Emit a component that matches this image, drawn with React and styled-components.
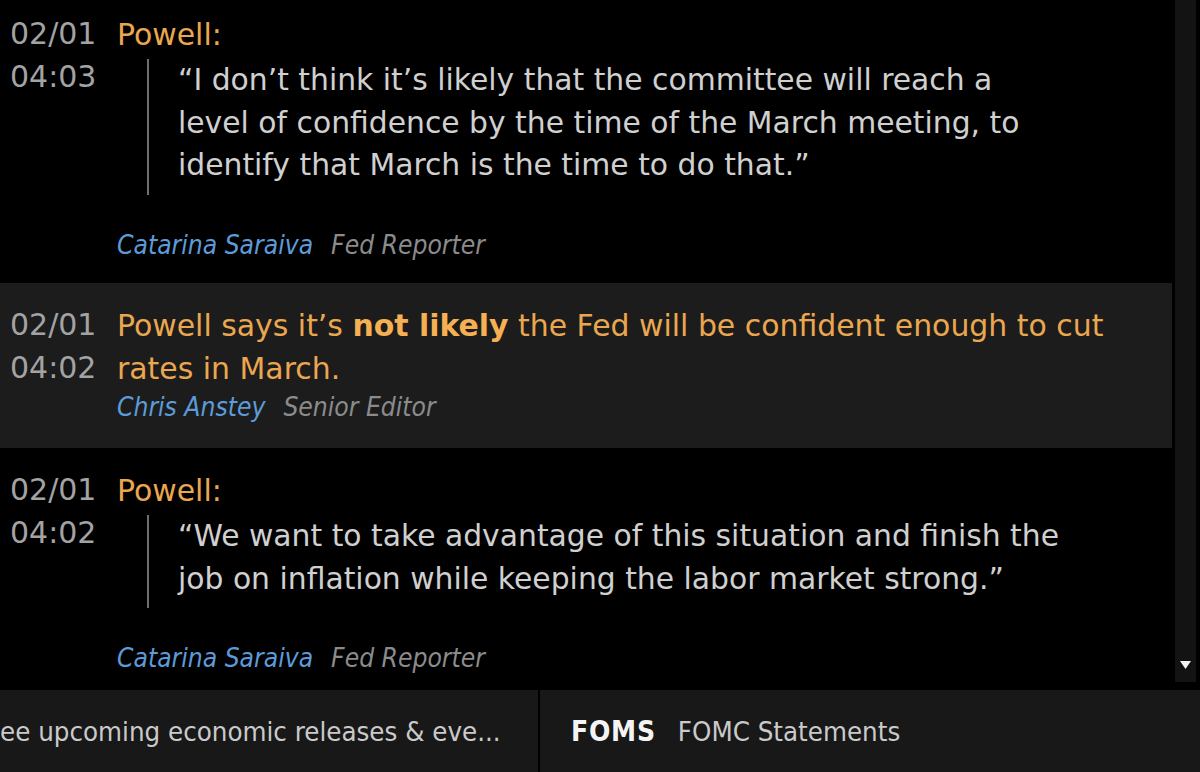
import React from 'react'
import styled, { createGlobalStyle } from 'styled-components'

const GlobalStyle = createGlobalStyle`
    html, body {
        margin: 0;
        padding: 0;
        background: #000;
    }
    body {
        font-family: "DejaVu Sans", Verdana, sans-serif;
    }
`

const colors = {
    date: '#a3a3a3',
    orange: '#eba74f',
    orangeBold: '#f4b052',
    quote: '#d0d0d0',
    author: '#5d9bd8',
    role: '#8b8b8b',
    highlight: '#1c1c1c',
    bar: '#181818',
}

const Screen = styled.div`
    width: 1200px;
    height: 772px;
    display: flex;
    flex-direction: column;
    background: #000;
    overflow: hidden;
`

const Feed = styled.div`
    height: 690px;
    display: flex;
`

const List = styled.div`
    flex: 1;
    display: flex;
    flex-direction: column;
`

const Scrollbar = styled.div`
    width: 28px;
    padding: 0 4px 8px 3px;
    box-sizing: border-box;
    display: flex;
`

const Track = styled.div`
    flex: 1;
    background: #131313;
    display: flex;
    align-items: flex-end;
    justify-content: center;
    padding-bottom: 13px;
`

const Story = styled.div`
    display: grid;
    grid-template-columns: 117px 1fr;
    padding: ${(p) => p.$pad};
    height: ${(p) => p.$h}px;
    box-sizing: border-box;
    background: ${(p) => (p.$active ? colors.highlight : 'transparent')};
`

const Stamp = styled.div`
    padding-left: 10px;
    font-size: 30px;
    line-height: 42.5px;
    color: ${colors.date};
    display: flex;
    flex-direction: column;
`

const Body = styled.div`
    display: flex;
    flex-direction: column;
`

const Headline = styled.div`
    font-size: 29.9px;
    line-height: 43px;
    color: ${colors.orange};
    white-space: nowrap;

    b {
        color: ${colors.orangeBold};
        font-weight: 700;
    }
`

const Quote = styled.blockquote`
    margin: 3px 0 0 30px;
    padding: 0 0 8px 29px;
    border-left: 2px solid #6e6e6e;
    font-size: 29.8px;
    line-height: 42.5px;
    color: ${colors.quote};
    white-space: nowrap;
`

const Byline = styled.div`
    margin-top: ${(p) => p.$gap}px;
    font-family: "DejaVu Sans Condensed", "DejaVu Sans", sans-serif;
    font-style: italic;
    font-size: 26.2px;
    line-height: 34px;
    display: flex;
    gap: 18px;
`

const Author = styled.span`
    color: ${colors.author};
`

const Role = styled.span`
    color: ${colors.role};
`

const BottomBar = styled.div`
    flex: 1;
    display: flex;
    background: ${colors.bar};
    font-family: "DejaVu Sans Condensed", "DejaVu Sans", sans-serif;
    font-size: 27.4px;
    color: #cacaca;
`

const Cell = styled.div`
    width: ${(p) => p.$w}px;
    display: flex;
    align-items: center;
    gap: 22px;
    padding-left: ${(p) => p.$pl}px;
    box-sizing: border-box;
    border-right: ${(p) => (p.$divider ? '2px solid #000' : 'none')};
    white-space: nowrap;
    overflow: hidden;
`

const Code = styled.span`
    font-weight: 700;
    font-size: 28px;
    letter-spacing: 0.75px;
    color: #f4f4f4;
`

function Arrow() {
    return (
        <svg width="11" height="8" viewBox="0 0 11 8">
            <path d="M0 0 H11 L5.5 8 Z" fill="#f2f2f2" />
        </svg>
    )
}

function App() {
    return (
        <Screen>
            <GlobalStyle />
            <Feed>
                <List>
                    <Story $pad="13px 0 0 0" $h={283}>
                        <Stamp>
                            <span>02/01</span>
                            <span>04:03</span>
                        </Stamp>
                        <Body>
                            <Headline>Powell:</Headline>
                            <Quote>
                                “I don’t think it’s likely that the committee will reach a
                                <br />
                                level of confidence by the time of the March meeting, to
                                <br />
                                identify that March is the time to do that.”
                            </Quote>
                            <Byline $gap={33}>
                                <Author>Catarina Saraiva</Author>
                                <Role>Fed Reporter</Role>
                            </Byline>
                        </Body>
                    </Story>
                    <Story $pad="21px 0 0 0" $h={165} $active>
                        <Stamp>
                            <span>02/01</span>
                            <span>04:02</span>
                        </Stamp>
                        <Body>
                            <Headline>
                                Powell says it’s <b>not likely</b> the Fed will be confident enough to cut
                                <br />
                                rates in March.
                            </Headline>
                            <Byline $gap={0}>
                                <Author>Chris Anstey</Author>
                                <Role>Senior Editor</Role>
                            </Byline>
                        </Body>
                    </Story>
                    <Story $pad="21px 0 0 0" $h={242}>
                        <Stamp>
                            <span>02/01</span>
                            <span>04:02</span>
                        </Stamp>
                        <Body>
                            <Headline>Powell:</Headline>
                            <Quote>
                                “We want to take advantage of this situation and finish the
                                <br />
                                job on inflation while keeping the labor market strong.”
                            </Quote>
                            <Byline $gap={33}>
                                <Author>Catarina Saraiva</Author>
                                <Role>Fed Reporter</Role>
                            </Byline>
                        </Body>
                    </Story>
                </List>
                <Scrollbar>
                    <Track>
                        <Arrow />
                    </Track>
                </Scrollbar>
            </Feed>
            <BottomBar>
                <Cell $w={540} $pl={0} $divider>
                    ee upcoming economic releases &amp; eve...
                </Cell>
                <Cell $w={660} $pl={31}>
                    <Code>FOMS</Code>
                    <span>FOMC Statements</span>
                </Cell>
            </BottomBar>
        </Screen>
    )
}

export default App
